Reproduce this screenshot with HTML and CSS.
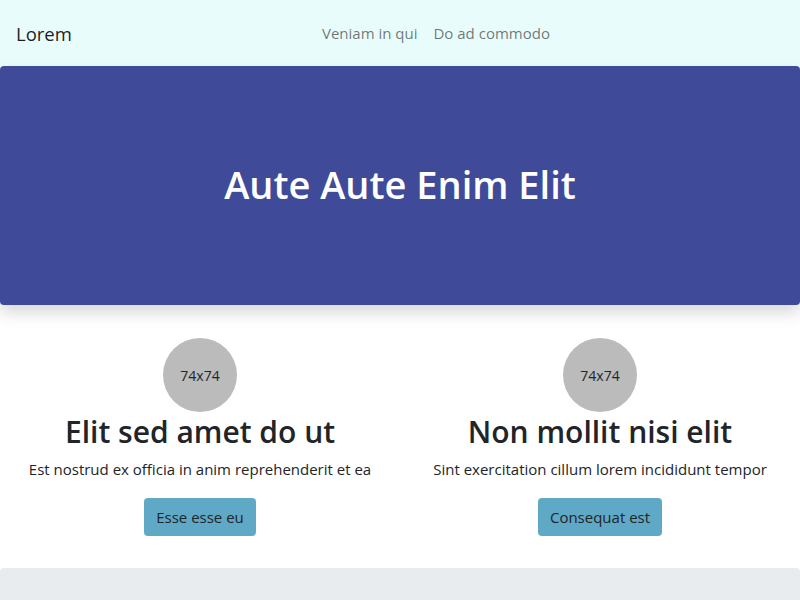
FILE: index.html
```html
<!DOCTYPE html>
<html>
<head>
<meta charset="utf-8">
<link rel="stylesheet" href="styles.css">
</head>
<body>
<nav class="navbar">
  <a class="brand" href="#">Lorem</a>
  <ul class="nav">
    <li><a href="#">Veniam in qui</a></li>
    <li><a href="#">Do ad commodo</a></li>
  </ul>
</nav>
<header class="hero">
  <h1>Aute Aute Enim Elit</h1>
</header>
<section class="features">
  <div class="feature">
    <div class="avatar">74x74</div>
    <h2>Elit sed amet do ut</h2>
    <p>Est nostrud ex officia in anim reprehenderit et ea</p>
    <a class="btn" href="#">Esse esse eu</a>
  </div>
  <div class="feature">
    <div class="avatar">74x74</div>
    <h2>Non mollit nisi elit</h2>
    <p>Sint exercitation cillum lorem incididunt tempor</p>
    <a class="btn" href="#">Consequat est</a>
  </div>
</section>
<footer class="footer"></footer>
</body>
</html>
```
FILE: styles.css
```css
* { box-sizing: border-box; }
html, body { margin: 0; padding: 0; }
body {
  font-family: "Open Sans", "Noto Sans", sans-serif;
  color: #212529;
  background: #fff;
  width: 800px;
  height: 600px;
  overflow: hidden;
}
a { text-decoration: none; }
.navbar {
  height: 66px;
  background: #e8fcfb;
  display: flex;
  align-items: center;
  padding: 0 16px;
}
.brand {
  font-size: 18.5px;
  color: rgba(0,0,0,.9);
  margin-right: 16px;
}
.nav {
  list-style: none;
  margin: 0;
  padding: 0;
  flex: 1;
  display: flex;
  justify-content: center;
  gap: 16px;
}
.nav a {
  font-size: 15px;
  color: rgba(0,0,0,.55);
}
.hero {
  height: 239px;
  background: #3f4b98;
  border-radius: 4px;
  box-shadow: 0 8px 16px rgba(0,0,0,.15);
  display: flex;
  align-items: center;
  justify-content: center;
  position: relative;
  padding-bottom: 3px;
}
.hero h1 {
  margin: 0;
  color: #fff;
  font-size: 38px;
  font-weight: 600;
}
.features {
  display: grid;
  grid-template-columns: 1fr 1fr;
  padding: 33px 0 32px;
}
.feature {
  display: flex;
  flex-direction: column;
  align-items: center;
  text-align: center;
}
.avatar {
  width: 74px;
  height: 74px;
  border-radius: 50%;
  background: #bbbbbb;
  display: flex;
  align-items: center;
  justify-content: center;
  font-size: 14px;
  color: #212529;
}
.feature h2 {
  margin: 2px 0 0;
  height: 36px;
  font-size: 30px;
  font-weight: 600;
  line-height: 36px;
}
.feature p {
  margin: 8px 0 0;
  height: 22px;
  font-size: 15px;
  line-height: 22px;
}
.btn {
  display: inline-block;
  margin-top: 18px;
  background: #5fa8c6;
  color: #212529;
  font-size: 15px;
  padding: 0 12px;
  height: 38px;
  line-height: 38px;
  border-radius: 4px;
}
.footer {
  height: 40px;
  background: #e9ecef;
  border-radius: 4px 4px 0 0;
}
```
